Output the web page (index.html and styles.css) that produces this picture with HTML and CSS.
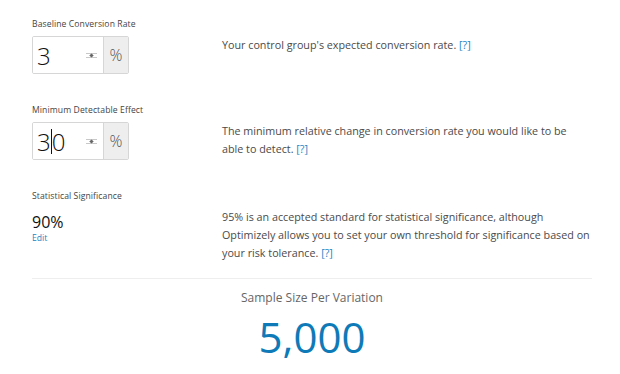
FILE: index.html
```html
<!DOCTYPE html>
<html>
<head>
<meta charset="utf-8">
<link rel="stylesheet" href="styles.css">
</head>
<body>
<div class="calc">
  <div class="row">
    <div class="left">
      <div class="label">Baseline Conversion Rate</div>
      <div class="field">
        <div class="input"><span class="val">3</span><span class="spin"><svg width="13" height="7" viewBox="0 0 13 7"><path d="M1 1.5h11M1 5.5h11" stroke="#c8c8c8" stroke-width="1"/><path d="M6.5 1.5l2.2 2H4.3z M6.5 5.5l2.2-2H4.3z" fill="#666"/></svg></span></div>
        <div class="addon">%</div>
      </div>
    </div>
    <div class="right">Your control group's expected conversion rate. <a class="help">[?]</a></div>
  </div>
  <div class="row">
    <div class="left">
      <div class="label">Minimum Detectable Effect</div>
      <div class="field">
        <div class="input"><span class="val">3<span class="caret"></span>0</span><span class="spin"><svg width="13" height="7" viewBox="0 0 13 7"><path d="M1 1.5h11M1 5.5h11" stroke="#c8c8c8" stroke-width="1"/><path d="M6.5 1.5l2.2 2H4.3z M6.5 5.5l2.2-2H4.3z" fill="#666"/></svg></span></div>
        <div class="addon">%</div>
      </div>
    </div>
    <div class="right tight">The minimum relative change in conversion rate you would like to be able to detect. <a class="help">[?]</a></div>
  </div>
  <div class="row last">
    <div class="left">
      <div class="label">Statistical Significance</div>
      <div class="sig">90%</div>
      <a class="edit">Edit</a>
    </div>
    <div class="right">95% is an accepted standard for statistical significance, although Optimizely allows you to set your own threshold for significance based on your risk tolerance. <a class="help">[?]</a></div>
  </div>
  <div class="result">
    <div class="result-label">Sample Size Per Variation</div>
    <div class="result-value">5,000</div>
  </div>
</div>
</body>
</html>
```
FILE: styles.css
```css
* { box-sizing: border-box; }
html, body { margin: 0; padding: 0; background: #fff; }
body {
  font-family: "Open Sans", "Liberation Sans", sans-serif;
  color: #444;
  width: 620px;
  height: 374px;
  overflow: hidden;
}
.calc {
  padding: 18px 28px 0 32px;
}
.row {
  display: flex;
  height: 86px;
}
.row.last {
  height: 89px;
  border-bottom: 1px solid #eee;
}
.left {
  width: 190px;
  flex: none;
}
.label {
  font-size: 8.6px;
  line-height: 12px;
  color: #444;
  font-weight: 500;
  letter-spacing: 0.1px;
}
.field {
  display: flex;
  margin-top: 6px;
  width: 97px;
  height: 38px;
  border: 1px solid #d6d6d6;
  border-radius: 2px;
  overflow: hidden;
}
.input {
  flex: 1;
  display: flex;
  align-items: center;
  justify-content: space-between;
  padding: 0 5px 0 4px;
  background: #fff;
}
.val {
  font-size: 24px;
  color: #111;
  font-weight: 300;
  display: flex;
  align-items: center;
}
.caret {
  display: inline-block;
  width: 1px;
  height: 25px;
  background: #111;
}
.spin { display: flex; align-items: center; }
.addon {
  width: 25px;
  background: #eee;
  border-left: 1px solid #d6d6d6;
  display: flex;
  align-items: center;
  justify-content: center;
  font-size: 16px;
  color: #555;
  font-weight: 300;
}
.right {
  flex: 1;
  padding-top: 18px;
  font-size: 10.75px;
  line-height: 18px;
  color: #4a4a4a;
  max-width: 369px;
}
.right.tight { max-width: 352px; }
.help { color: #1a85c4; }
.sig {
  margin-top: 10px;
  font-size: 16px;
  line-height: 20px;
  color: #111;
}
.edit {
  display: block;
  font-size: 8.6px;
  line-height: 12px;
  color: #1a85c4;
}
.result {
  text-align: center;
  width: 560px;
}
.result-label {
  margin-top: 11px;
  font-size: 12px;
  line-height: 16px;
  color: #666;
}
.result-value {
  margin-top: 7px;
  font-size: 42px;
  line-height: 48px;
  color: #0e7ab8;
}
```
